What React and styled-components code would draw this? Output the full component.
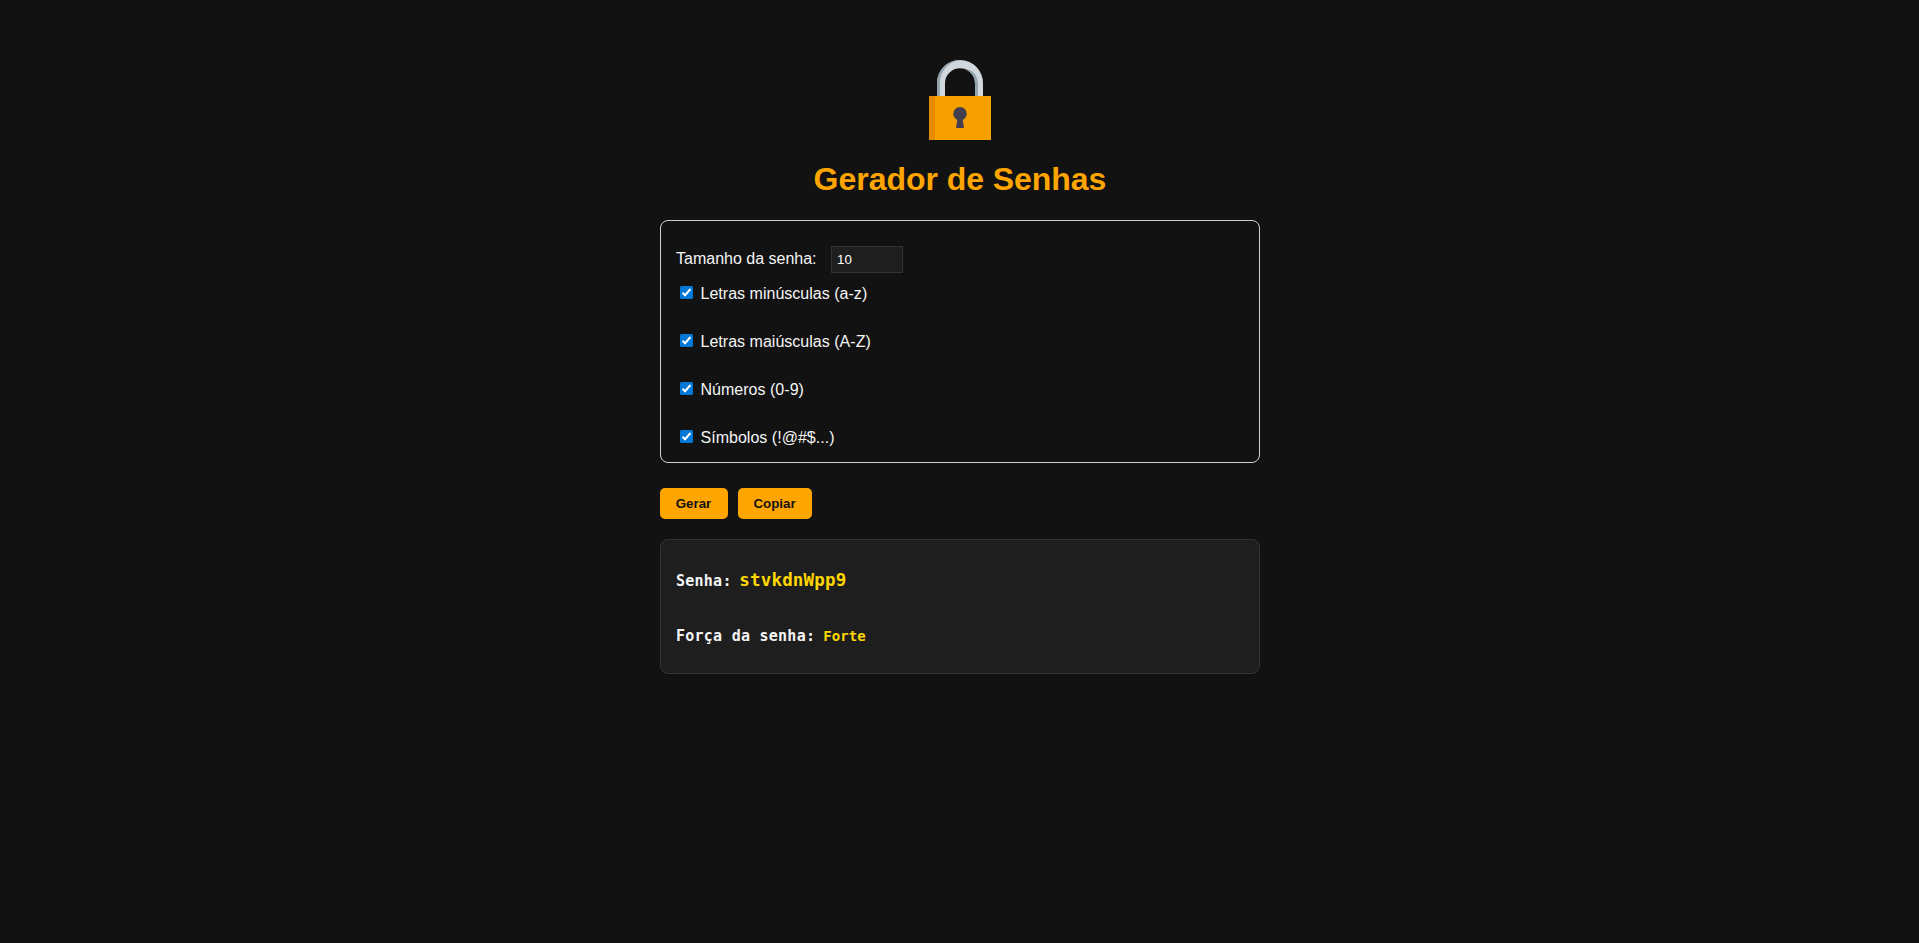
import React, { useState } from "react";
import styled, { createGlobalStyle } from "styled-components";

const GlobalStyle = createGlobalStyle`
  body {
    margin: 0;
    background: #121212;
    color: #f5f5f5;
    font-family: "Liberation Sans", Arial, sans-serif;
    font-size: 16px;
  }
  * { box-sizing: border-box; }
`;

const Page = styled.main`
  width: 600px;
  margin: 0 auto;
  padding-top: 60px;
`;

const Logo = styled.svg`
  display: block;
  width: 80px;
  height: 80px;
  margin: 0 auto;
`;

const Title = styled.h1`
  margin: 21px 0 22px;
  padding-left: 1px;
  text-align: center;
  color: #ffa500;
  font-size: 32px;
  line-height: 37px;
  letter-spacing: -0.04px;
`;

const Options = styled.section`
  height: 243px;
  padding: 25px 15px 0;
  border: 1px solid #d0d0d0;
  border-radius: 8px;
`;

const LengthRow = styled.label`
  display: flex;
  align-items: flex-start;
  height: 27px;
  padding-left: 0.5px;
  line-height: 25px;
`;

const LengthInput = styled.input`
  width: 72px;
  height: 27px;
  margin: 0 0 0 14.5px;
  padding: 5px;
  border: 1px solid #333;
  border-radius: 0;
  background: #1e1e1e;
  color: #fff;
  font: 13.333px "Liberation Sans", Arial, sans-serif;
  appearance: textfield;
`;

const CheckList = styled.div`
  display: flex;
  flex-direction: column;
  gap: 30px;
  padding-top: 11px;
`;

const CheckRow = styled.label`
  display: flex;
  align-items: flex-start;
  height: 18px;
  padding: 2px 0 0 4px;
  gap: 8px;
  line-height: 16px;
  letter-spacing: 0.02px;
`;

const CheckBox = styled.span`
  position: relative;
  width: 13px;
  height: 13px;

  input {
    position: absolute;
    inset: 0;
    width: 13px;
    height: 13px;
    margin: 0;
    opacity: 0;
  }

  svg {
    display: block;
    width: 13px;
    height: 13px;
    border-radius: 1.5px;
    background: #0078d7;
  }
`;

const Actions = styled.div`
  display: flex;
  gap: 10px;
  margin: 25px 0 20px;
`;

const Button = styled.button`
  width: ${({ $width }) => $width}px;
  height: 31px;
  padding: 0;
  border: 0;
  border-radius: 5px;
  background: #ffa500;
  color: #121212;
  font: bold 13.333px "Liberation Sans", Arial, sans-serif;
  cursor: pointer;
`;

const Result = styled.section`
  display: flex;
  flex-direction: column;
  gap: 32px;
  height: 135px;
  padding: 28px 15px 0 15.5px;
  border: 1px solid #333;
  border-radius: 8px;
  background: #1e1e1e;
  font-family: "DejaVu Sans Mono", monospace;
  font-weight: bold;
`;

const ResultLine = styled.p`
  display: flex;
  align-items: baseline;
  gap: ${({ $gap }) => $gap}px;
  height: 24px;
  margin: 0;
  font-size: 15px;
  line-height: 24px;
  letter-spacing: 0.25px;
`;

const Password = styled.span`
  color: #ffd700;
  font-size: 17.5px;
  letter-spacing: 0.2px;
`;

const Strength = styled.span`
  color: #ffd700;
  font-size: 14px;
  letter-spacing: 0.1px;
`;

const options = [
  "Letras minúsculas (a-z)",
  "Letras maiúsculas (A-Z)",
  "Números (0-9)",
  "Símbolos (!@#$...)",
];

function Padlock() {
  return (
    <Logo viewBox="0 0 80 80" aria-hidden="true">
      <path d="M17 36V23a23 23 0 0 1 46 0v13h-8V23.300a15 15 0 0 0-30 0V36z" fill="#d0d8de" />
      <path d="M17 36V23A23 23 0 0 1 41.500 0.050C29 1 20 11 20 23v13z" fill="#93a4ae" />
      <path d="M55 36V23.300A15 15 0 0 0 38.500 8.380C50 7 58 14 58 23.300V36z" fill="#93a4ae" />
      <path d="M9 36h62v44H9z" fill="#f8a000" />
      <path d="M9 36h6v44H9z" fill="#e68a00" />
      <circle cx="40" cy="53.700" r="6.800" fill="#433f4e" />
      <path d="M37.500 58h5L44 68h-8z" fill="#433f4e" />
    </Logo>
  );
}

function CheckOption({ label }) {
  const [checked, setChecked] = useState(true);
  return (
    <CheckRow>
      <CheckBox>
        <input type="checkbox" checked={checked} onChange={() => setChecked(!checked)} />
        <svg viewBox="0 0 13 13" aria-hidden="true">
          {checked && <path d="M2.500 6.700 5 9.200 10.500 3" fill="none" stroke="#fff" strokeWidth="2" />}
        </svg>
      </CheckBox>
      {label}
    </CheckRow>
  );
}

export default function App() {
  return (
    <Page>
      <GlobalStyle />
      <Padlock />
      <Title>Gerador de Senhas</Title>
      <Options>
        <LengthRow>
          Tamanho da senha:
          <LengthInput type="number" defaultValue="10" />
        </LengthRow>
        <CheckList>
          {options.map((label) => <CheckOption key={label} label={label} />)}
        </CheckList>
      </Options>
      <Actions>
        <Button $width={68}>Gerar</Button>
        <Button $width={74}>Copiar</Button>
      </Actions>
      <Result>
        <ResultLine $gap={7.5}>Senha: <Password>stvkdnWpp9</Password></ResultLine>
        <ResultLine $gap={8}>Força da senha: <Strength>Forte</Strength></ResultLine>
      </Result>
    </Page>
  );
}
